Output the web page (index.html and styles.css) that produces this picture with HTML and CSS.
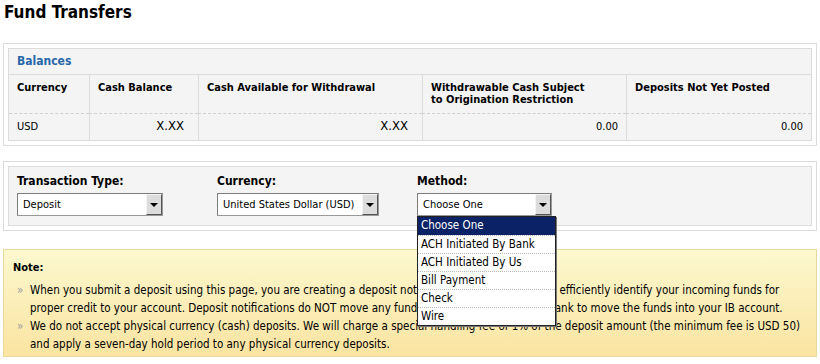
FILE: index.html
```html
<!DOCTYPE html>
<html>
<head>
  <title>Fund Transfers</title>
  <meta name="viewport" content="width=device-width, initial-scale=1">
  <link rel="stylesheet" href="styles.css">
</head>
<body>
  <h1 class="page-title">Fund Transfers</h1>

  <div class="panel">
    <div class="panel-box">
      <div class="box-title">Balances</div>
      <div class="bal-grid">
        <div class="bal-head">Currency</div>
        <div class="bal-head">Cash Balance</div>
        <div class="bal-head">Cash Available for Withdrawal</div>
        <div class="bal-head">Withdrawable Cash Subject<br>to Origination Restriction</div>
        <div class="bal-head">Deposits Not Yet Posted</div>

        <div class="bal-cell">USD</div>
        <div class="bal-cell num"><span class="masked">X.XX</span></div>
        <div class="bal-cell num"><span class="masked">X.XX</span></div>
        <div class="bal-cell num">0.00</div>
        <div class="bal-cell num">0.00</div>
      </div>
    </div>
  </div>

  <div class="panel panel-form">
    <div class="panel-box form-row">
      <div class="field">
        <label>Transaction Type:</label>
        <div class="select select-type">
          <span class="select-text">Deposit</span>
          <span class="select-btn"></span>
        </div>
      </div>
      <div class="field">
        <label>Currency:</label>
        <div class="select select-currency">
          <span class="select-text">United States Dollar (USD)</span>
          <span class="select-btn"></span>
        </div>
      </div>
      <div class="field">
        <label>Method:</label>
        <div class="select select-method">
          <span class="select-text">Choose One</span>
          <span class="select-btn"></span>
          <ul class="dropdown">
            <li class="selected">Choose One</li>
            <li>ACH Initiated By Bank</li>
            <li>ACH Initiated By Us</li>
            <li>Bill Payment</li>
            <li>Check</li>
            <li>Wire</li>
          </ul>
        </div>
      </div>
    </div>
  </div>

  <div class="note">
    <div class="note-title">Note:</div>
    <ul class="note-list">
      <li>When you submit a deposit using this page, you are creating a deposit notification which allows us to efficiently identify your incoming funds for proper credit to your account. Deposit notifications do NOT move any funds. You must contact your bank to move the funds into your IB account.</li>
      <li>We do not accept physical currency (cash) deposits. We will charge a special handling fee of 1% of the deposit amount (the minimum fee is USD 50) and apply a seven-day hold period to any physical currency deposits.</li>
    </ul>
  </div>
</body>
</html>
```

FILE: styles.css
```css
*, *::before, *::after {
  box-sizing: border-box;
  margin: 0;
  padding: 0;
}

body {
  font-family: "DejaVu Sans Condensed", "DejaVu Sans", sans-serif;
  font-size: 11px;
  color: #000;
  background: #fff;
  padding: 0 3px;
}

.page-title {
  font-size: 17px;
  font-weight: bold;
  line-height: 20px;
  padding: 2px 1px 0;
  height: 43px;
}

/* panels */
.panel {
  border: 1px solid #dcdcdc;
  padding: 4px;
  background: #fff;
}

.panel-box {
  border: 1px solid #dcdcdc;
  background: #f4f4f4;
}

.box-title {
  height: 26px;
  padding: 5px 8px 0;
  font-size: 12px;
  font-weight: bold;
  color: #2767a9;
  border-bottom: 1px solid #dcdcdc;
}

/* balances */
.bal-grid {
  display: grid;
  grid-template-columns: 80px 109px 224px 204px 1fr;
}

.bal-head {
  height: 39px;
  padding: 7px 8px 0;
  font-weight: bold;
  line-height: 12px;
  border-bottom: 1px dashed #cfcfcf;
  border-left: 1px solid #dcdcdc;
}

.bal-cell {
  height: 26px;
  padding: 6px 8px 0;
  border-left: 1px solid #dcdcdc;
}

.bal-head:nth-child(5n+1), .bal-cell:nth-child(5n+1) {
  border-left: none;
}

.num {
  text-align: right;
}

.masked {
  font-size: 13px;
  padding: 0 6px 0 0;
  position: relative;
  top: -2px;
}

/* form */
.panel-form {
  margin-top: 15px;
}

.form-row {
  display: flex;
  height: 60px;
  padding: 7px 0 0 8px;
}

.field {
  width: 200px;
}

.field label {
  display: block;
  font-size: 12px;
  font-weight: bold;
  line-height: 14px;
  margin-bottom: 5px;
}

.select {
  position: relative;
  display: flex;
  align-items: center;
  height: 23px;
  background: #fff;
  border: 1px solid #7b7b7b;
  border-right-color: #9a9a9a;
  border-bottom-color: #9a9a9a;
}

.select-type { width: 146px; }
.select-currency { width: 162px; }
.select-method { width: 135px; }

.select-text {
  flex: 1;
  padding-left: 5px;
  font-size: 11px;
}

.select-btn {
  position: relative;
  width: 16px;
  height: 21px;
  background: #dcdcdc;
  border: 1px solid #f4f4f4;
  border-right-color: #555;
  border-bottom-color: #555;
}

.select-btn::after {
  content: "";
  position: absolute;
  left: 3px;
  top: 8px;
  border-left: 4px solid transparent;
  border-right: 4px solid transparent;
  border-top: 4px solid #000;
}

.dropdown {
  position: absolute;
  top: 22px;
  left: -1px;
  width: 139px;
  list-style: none;
  background: #fff;
  border: 1px solid #222;
  box-shadow: 1px 1px 0 #777;
  z-index: 2;
}

.dropdown li {
  height: 18px;
  padding: 1px 0 0 3px;
  font-size: 11.5px;
  border-top: 1px dotted #bbb;
}

.dropdown li:first-child {
  border-top: none;
}

.dropdown li.selected {
  background: #0c2266;
  color: #fff;
}

/* note */
.note {
  margin-top: 18px;
  height: 108px;
  padding: 9px 9px 0;
  border: 1px solid #e9d99a;
  background: linear-gradient(#fcf8cf, #fbe4a1);
}

.note-title {
  font-weight: bold;
  line-height: 18px;
  margin-bottom: 4px;
}

.note-list {
  list-style: none;
  font-size: 11.5px;
}

.note-list li {
  position: relative;
  padding-left: 17px;
  line-height: 18px;
}

.note-list li::before {
  content: "\00bb";
  position: absolute;
  left: 4px;
  color: #a0a0a0;
}
```
